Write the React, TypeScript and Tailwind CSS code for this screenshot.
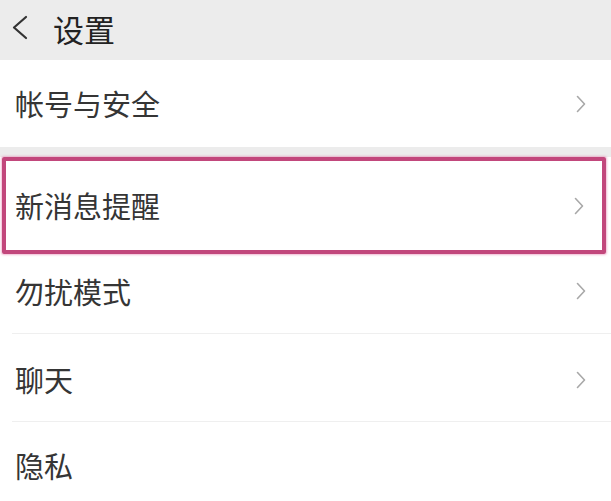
import React from 'react';

const Chevron: React.FC = () => (
  <svg width="10" height="18" viewBox="0 0 10 18" fill="none" className="shrink-0">
    <path d="M1.5 1.5 L8.5 9 L1.5 16.5" stroke="#a8a8a8" strokeWidth="1.6" strokeLinecap="round" strokeLinejoin="round" />
  </svg>
);

const Row: React.FC<{ label: string; arrow?: boolean; className?: string }> = ({ label, arrow = true, className = '' }) => (
  <div className={`flex items-center justify-between pl-[15px] pr-[25px] ${className}`}>
    <span className="text-[29px] leading-none text-[#353535]">{label}</span>
    {arrow && <Chevron />}
  </div>
);

const App: React.FC = () => {
  return (
    <div
      className="w-[611px] h-[501px] overflow-hidden bg-white"
      style={{ fontFamily: '"Noto Sans CJK SC", "Noto Sans", sans-serif' }}
    >
      <header className="h-[60px] bg-[#ececec] flex items-center pl-[11px]">
        <svg width="17" height="25" viewBox="0 0 17 25" fill="none" className="-mt-[6px]">
          <path d="M15 2 L3 12.5 L15 23" stroke="#333" strokeWidth="2.2" strokeLinecap="round" strokeLinejoin="round" />
        </svg>
        <h1 className="ml-[25px] -mt-[4px] text-[31px] leading-none text-[#222]">设置</h1>
      </header>

      <Row label="帐号与安全" className="h-[87px]" />
      <div className="h-[10px] bg-[#ececec]" />

      <div className="mx-[2px] mr-[5px] border-[4px] border-[#c2477c] rounded-[2px] shadow-[0_0_2px_1px_rgba(230,120,170,0.5)]">
        <Row label="新消息提醒" className="h-[89px] !pl-[9px] !pr-[18px]" />
      </div>

      <Row label="勿扰模式" className="h-[79px] pb-[5px]" />
      <div className="ml-[12px] h-px bg-[#efefef]" />
      <Row label="聊天" className="h-[87px] pt-[4px]" />
      <div className="ml-[12px] h-px bg-[#efefef]" />
      <Row label="隐私" arrow={false} className="h-[86px]" />
    </div>
  );
};

export default App;
